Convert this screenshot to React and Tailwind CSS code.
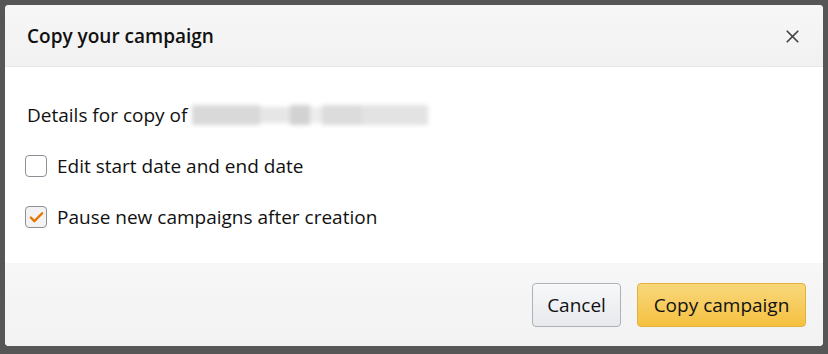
import { X, Check } from "lucide-react";

const font = { fontFamily: '"Open Sans", "Noto Sans", sans-serif' };

// Checkbox row in the modal body
const CheckRow = ({ checked, label }) => (
  <div className="flex items-center gap-[10px] h-[22px]">
    <span
      className={`w-[22px] h-[22px] rounded-[4px] border border-[#8d9096] flex items-center justify-center ${
        checked ? "bg-[#f3f3f3]" : "bg-white"
      }`}
    >
      {checked && <Check size={17} strokeWidth={3.4} className="text-[#e77600]" />}
    </span>
    <span className="text-[19px] text-[#111]">{label}</span>
  </div>
);

export default function App() {
  return (
    <div
      className="w-[828px] h-[354px] bg-[#565656] pt-[5px] pl-[5px] pr-[5px] pb-[8px] overflow-hidden"
      style={font}
    >
      <div className="h-full rounded-[4px] overflow-hidden flex flex-col bg-white">
        {/* Header */}
        <div className="h-[62px] shrink-0 flex items-center justify-between pl-[22px] pr-[20px] pt-[2px] bg-gradient-to-b from-[#f7f7f7] to-[#f1f1f1] border-b border-[#e7e7e7]">
          <h2 className="text-[19px] font-semibold text-[#111]">
            Copy your campaign
          </h2>
          <X size={21} strokeWidth={2} className="text-[#444]" />
        </div>

        {/* Body */}
        <div className="flex-1 bg-white px-[20px] pt-[36px] flex flex-col gap-[28px]">
          <div className="flex items-center h-[24px] ml-[2px]">
            <span className="text-[19px] text-[#111]">Details for copy of</span>
            <span className="ml-[5px] flex items-center h-[24px] blur-[2px]">
              <span className="w-[68px] h-[20px] bg-[#d9d9d9]" />
              <span className="w-[30px] h-[16px] bg-[#e6e6e6]" />
              <span className="w-[20px] h-[20px] bg-[#d2d2d2]" />
              <span className="w-[12px] h-[16px] bg-[#ececec]" />
              <span className="w-[40px] h-[20px] bg-[#dcdcdc]" />
              <span className="w-[66px] h-[20px] bg-[#e3e3e3]" />
            </span>
          </div>
          <div className="flex flex-col gap-[29px]">
            <CheckRow checked={false} label="Edit start date and end date" />
            <CheckRow checked label="Pause new campaigns after creation" />
          </div>
        </div>

        {/* Footer */}
        <div className="h-[83px] shrink-0 flex items-start justify-end gap-[16px] pt-[20px] pr-[17px] bg-gradient-to-b from-[#f7f7f7] to-[#f2f2f2]">
          <button className="w-[89px] h-[44px] rounded-[4px] border border-[#adb1b8] bg-gradient-to-b from-[#f7f8fa] to-[#e7e9ec] text-[19px] text-[#111] shadow-[0_1px_0_rgba(255,255,255,0.6)_inset]">
            Cancel
          </button>
          <button className="w-[169px] h-[44px] rounded-[4px] border border-[#e3b23c] bg-gradient-to-b from-[#f8d77a] to-[#f5c13d] text-[19px] text-[#111]">
            Copy campaign
          </button>
        </div>
      </div>
    </div>
  );
}
